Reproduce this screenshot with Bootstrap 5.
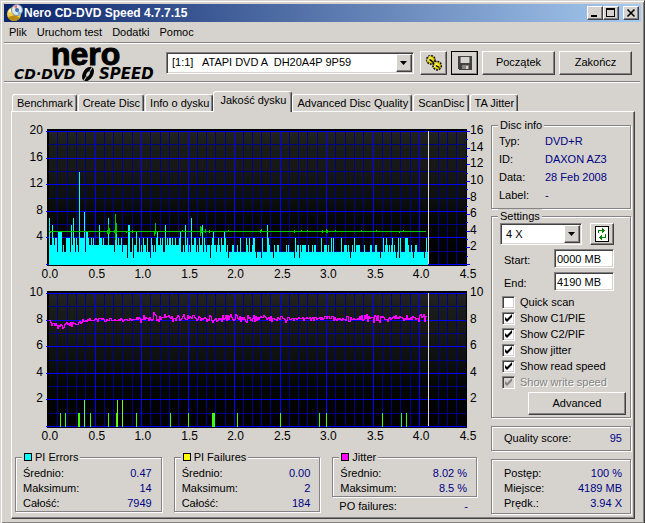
<!DOCTYPE html>
<html lang="pl">
<head>
<meta charset="utf-8">
<meta name="viewport" content="width=device-width, initial-scale=1">
<title>Nero CD-DVD Speed 4.7.7.15</title>
<link href="https://cdn.jsdelivr.net/npm/bootstrap@5.3.0/dist/css/bootstrap.min.css" rel="stylesheet">
<style>
:root{--face:#d6d3ce;--shade:#848284;--dark:#424142;--navy:#000084}
body{background:var(--face);color:#000;font:11px/15px "Liberation Sans",Arial,sans-serif}
.win{min-height:100vh;padding:2px 3px 4px 2px;border:1px solid var(--face);border-right-color:var(--dark);border-bottom-color:var(--dark);box-shadow:inset 1px 1px #fff,inset -1px -1px var(--shade)}
.titlebar{height:18px;margin:1px 0 0 1px;padding:0 2px;background:linear-gradient(90deg,#0a246a,#a6caf0);color:#fff}
.titlebar h1{font:bold 12px/18px "Liberation Sans",Arial,sans-serif}
.raised{background:var(--face);border:1px solid;border-color:#fff var(--dark) var(--dark) #fff;border-radius:0;box-shadow:inset -1px -1px var(--shade);color:#000;padding:0;font-size:11px;line-height:15px}
.capbtn{width:16px;height:14px}
.menubar{height:20px;padding-left:6px;gap:10px}
.menubar a{color:#000;text-decoration:none;line-height:20px}
.etch{height:2px;margin:0 1px;border-top:1px solid var(--shade);border-bottom:1px solid #fff}
.tools{height:37px;padding:0 9px 0 11px}
.logo{overflow:visible}
.sunk{background:#fff;border:1px solid;border-color:var(--shade) #fff #fff var(--shade);box-shadow:inset 1px 1px var(--dark),inset -1px -1px var(--face);border-radius:0;color:#000;font-size:11px}
select.sunk{appearance:none;width:100%;height:22px;padding:0 20px 0 5px;line-height:15px}
.drop{top:2px;right:2px;bottom:2px;width:16px;pointer-events:none}
.icobtn{width:27px;height:24px}
.icobtn.def{outline:1px solid #000;outline-offset:-1px;border-color:#000}
.bigbtn{width:73px;height:24px}
.drive{margin-right:6px}
.tabstrip{padding:8px 0 0 9px;height:28px}
.tabstrip a{height:17px;padding:0 3px 0 4px;color:#000;text-decoration:none;line-height:17px;border:1px solid;border-color:#fff var(--dark) transparent #fff;border-bottom:0;border-radius:3px 3px 0 0;box-shadow:inset -1px 0 var(--shade);margin-right:1px;white-space:nowrap}
.tabstrip a.now{height:21px;padding:0 5px 0 6px;position:relative;margin:0 0 -1px -1px;background:var(--face)}
.sheet{margin:0 6px 0 8px;border:1px solid;border-color:#fff var(--dark) var(--dark) #fff;box-shadow:inset -1px -1px var(--shade);padding:0 3px 4px 0}
.chart{display:block;width:100%;height:auto}
.chart text{font:12px "Liberation Sans",Arial,sans-serif}
.group{border:1px solid var(--shade);box-shadow:1px 1px #fff,inset 1px 1px #fff}
.group legend{float:none;width:auto;margin:0 0 0 6px;padding:0 2px;font-size:11px;line-height:14px;background:var(--face)}
.side{width:140px;padding-top:6px}
.val{color:var(--navy)}
.disc{padding:0 7px 4px;line-height:18px}
.disc dt{width:46px;font-weight:400}
.stats{padding:3px 14px 0 3px;gap:12px}
.stats>*{flex:1 1 0}
.rows{padding:2px 9px 0 7px}
.chip{display:inline-block;width:8px;height:8px;border:1px solid #000;margin-right:3px}
.field{width:60px;height:19px;padding:0 2px}
.span-row{padding-top:4px}
.reload{height:22px;padding:2px 4px}
.tick.form-check-input{width:13px;height:13px;margin:0 5px 0 0;float:none;border:1px solid;border-color:var(--shade) #fff #fff var(--shade);border-radius:0;background:#fff center/9px 9px no-repeat;box-shadow:inset 1px 1px var(--dark),inset -1px -1px var(--face);opacity:1}
.tick.form-check-input:checked{background-image:url("data:image/svg+xml,%3Csvg xmlns='http://www.w3.org/2000/svg' viewBox='0 0 9 9'%3E%3Cpath d='M1 3v3l2 2 5-5V0L3 5z'/%3E%3C/svg%3E")}
.tick.form-check-input:disabled{background-color:var(--face);filter:none}
.tick.form-check-input:disabled:checked{background-image:url("data:image/svg+xml,%3Csvg xmlns='http://www.w3.org/2000/svg' viewBox='0 0 9 9'%3E%3Cpath fill='%23848284' d='M1 3v3l2 2 5-5V0L3 5z'/%3E%3C/svg%3E")}
.off,.form-check-input:disabled~.off{color:var(--shade);text-shadow:1px 1px #fff;opacity:1}
.checks{line-height:16px;padding:3px 0 2px 10px}
.advbtn{width:98px;height:23px}
.advrow{padding:0 4px 2px}
.totals{line-height:15px}
</style>
<script src="https://cdn.jsdelivr.net/npm/bootstrap@5.3.0/dist/js/bootstrap.bundle.min.js"></script>
</head>
<body>
<div class="win d-flex flex-column">
  <header class="titlebar d-flex align-items-center">
    <svg width="18" height="18" viewBox="0 0 18 18" aria-hidden="true"><circle cx="8" cy="10" r="7" fill="#f3cf45"/><path d="M2 13a7 7 0 0 0 12 1l-5-3z" fill="#b98a12"/><path d="M2 8a7 7 0 0 1 4-4l2 5z" fill="#fff6b0"/><circle cx="11" cy="6" r="5.500" fill="#dfe8ef" stroke="#7b95aa"/><path d="M11 6 8 2.500a5 5 0 0 1 3-1.500z" fill="#e77"/><path d="M11 6l4 3a5 5 0 0 1-3 2z" fill="#79b6e8"/><circle cx="11" cy="6" r="2" fill="#3d6fae"/></svg>
    <h1 class="m-0 ms-0 flex-grow-1">Nero CD-DVD Speed 4.7.7.15</h1>
    <button class="raised capbtn d-flex" aria-label="Minimalizuj"><svg width="14" height="12" shape-rendering="crispEdges"><path d="M3 8h6v2H3z"/></svg></button>
    <button class="raised capbtn d-flex" aria-label="Maksymalizuj"><svg width="14" height="12" shape-rendering="crispEdges"><path d="M2 1h9v9H2zM3 3v6h7V3z" fill-rule="evenodd"/></svg></button>
    <button class="raised capbtn d-flex ms-1 me-0" aria-label="Zamknij"><svg width="14" height="12"><path d="M3.500 2.500l7 7M10.500 2.500l-7 7" stroke="#000" stroke-width="1.600"/></svg></button>
  </header>
  <nav class="menubar d-flex">
    <a href="#">Plik</a><a href="#">Uruchom test</a><a href="#">Dodatki</a><a href="#">Pomoc</a>
  </nav>
  <div class="etch"></div>
  <div class="tools d-flex align-items-center">
    <svg class="logo flex-shrink-0" width="152" height="37" viewBox="14 44 152 37" role="img" aria-label="nero CD-DVD SPEED">
      <text x="51" y="65" font-family="Liberation Sans,Arial,sans-serif" font-weight="700" font-size="32" stroke="#000" stroke-width="1">nero</text>
      <text x="14" y="79" font-family="DejaVu Sans,sans-serif" font-weight="700" font-style="italic" font-size="14">CD·DVD</text>
      <text x="99" y="79" font-family="DejaVu Sans,sans-serif" font-weight="700" font-style="italic" font-size="15">SPEED</text>
      <g transform="rotate(32 88 74)"><ellipse cx="88" cy="74" rx="5" ry="8"/><path d="M88 66v5M88 77v5" stroke="#d6d3ce"/><ellipse cx="88" cy="74" rx="1.500" ry="3" fill="#d6d3ce"/></g>
    </svg>
    <div class="drive position-relative flex-grow-1">
      <select class="sunk" aria-label="Napęd"><option>[1:1] &nbsp; ATAPI DVD A &nbsp;DH20A4P 9P59</option></select>
      <span class="raised drop position-absolute d-flex align-items-center justify-content-center"><svg width="8" height="4"><path d="M0 0h7L3.500 4z"/></svg></span>
    </div>
    <button class="raised icobtn" aria-label="Opcje"><svg width="18" height="18" viewBox="0 0 20 20"><g stroke="#000"><circle cx="6.500" cy="6.500" r="4.500" fill="#f7e600" stroke-dasharray="2 1" stroke-width="2"/><circle cx="6.500" cy="6.500" r="3.500" fill="#f7e600" stroke="#b5a500"/><path d="M5 2l1 4-4 1" stroke="#fff" fill="none"/><circle cx="13.500" cy="13" r="4.500" fill="#f7e600" stroke-dasharray="2 1" stroke-width="2"/><circle cx="13.500" cy="13" r="3.500" fill="#f7e600" stroke="#b5a500"/><path d="M12 9l1 4-3 1" stroke="#fff" fill="none"/><path d="M5 6l4 3M12 13l4 2" stroke-width="1.500"/></g></svg></button>
    <button class="raised icobtn def ms-1" aria-label="Zapisz"><svg width="16" height="16" viewBox="0 0 16 16" shape-rendering="crispEdges"><path d="M1 1h14v14H2l-1-1z" fill="#424142"/><path d="M4 2h8v6H4z" fill="#d6d3ce"/><path d="M3 2h1v6H3zM12 2h1v6h-1z" fill="#848284"/><path d="M5 10h7v4H5z" fill="#848284"/><path d="M9 11h2v3H9z" fill="#d6d3ce"/></svg></button>
    <button class="raised bigbtn ms-1">Początek</button>
    <button class="raised bigbtn ms-1">Zakończ</button>
  </div>
  <div class="etch"></div>
  <nav class="tabstrip d-flex align-items-end">
    <a href="#">Benchmark</a><a href="#">Create Disc</a><a href="#">Info o dysku</a><a href="#" class="now" aria-current="page">Jakość dysku</a><a href="#">Advanced Disc Quality</a><a href="#">ScanDisc</a><a href="#">TA Jitter</a>
  </nav>
  <main class="sheet d-flex flex-grow-1">
    <section class="flex-grow-1">
      <div class="pt-2">
        <svg class="chart" id="errors" viewBox="11 120 480 164" role="img" aria-label="PI Errors"></svg>
        <svg class="chart" id="fails" viewBox="11 122 480 164" role="img" aria-label="PI Failures, Jitter"></svg>
      </div>
      <div class="stats d-flex align-items-start">
        <fieldset class="group"><legend><span class="chip" style="background:#0ff"></span>PI Errors</legend>
          <div class="rows"><div class="d-flex justify-content-between"><span>Średnio:</span><span class="val">0.47</span></div><div class="d-flex justify-content-between"><span>Maksimum:</span><span class="val">14</span></div><div class="d-flex justify-content-between"><span>Całość:</span><span class="val">7949</span></div></div></fieldset>
        <fieldset class="group"><legend><span class="chip" style="background:#ff0"></span>PI Failures</legend>
          <div class="rows"><div class="d-flex justify-content-between"><span>Średnio:</span><span class="val">0.00</span></div><div class="d-flex justify-content-between"><span>Maksimum:</span><span class="val">2</span></div><div class="d-flex justify-content-between"><span>Całość:</span><span class="val">184</span></div></div></fieldset>
        <div><fieldset class="group"><legend><span class="chip" style="background:#f0f"></span>Jitter</legend>
          <div class="rows"><div class="d-flex justify-content-between"><span>Średnio:</span><span class="val">8.02 %</span></div><div class="d-flex justify-content-between"><span>Maksimum:</span><span class="val">8.5 %</span></div></div></fieldset>
          <div class="rows d-flex justify-content-between"><span>PO failures:</span><span class="val">-</span></div></div>
      </div>
    </section>
    <aside class="side d-flex flex-column flex-shrink-0">
      <fieldset class="group"><legend>Disc info</legend>
        <dl class="disc m-0">
          <div class="d-flex"><dt>Typ:</dt><dd class="val m-0">DVD+R</dd></div>
          <div class="d-flex"><dt>ID:</dt><dd class="val m-0">DAXON AZ3</dd></div>
          <div class="d-flex"><dt>Data:</dt><dd class="val m-0">28 Feb 2008</dd></div>
          <div class="d-flex"><dt>Label:</dt><dd class="val m-0">-</dd></div>
        </dl>
      </fieldset>
      <fieldset class="group"><legend>Settings</legend>
        <div class="ps-2 pe-3 d-flex align-items-center justify-content-between">
          <div class="position-relative flex-grow-1 me-2">
            <select class="sunk" aria-label="Prędkość"><option>4 X</option></select>
            <span class="raised drop position-absolute d-flex align-items-center justify-content-center"><svg width="8" height="4"><path d="M0 0h7L3.500 4z"/></svg></span>
          </div>
          <button class="raised reload d-flex" aria-label="Odśwież"><svg width="14" height="16" viewBox="0 0 14 16" shape-rendering="crispEdges"><path d="M.5.5h13v15H.5z" fill="#fff" stroke="#000"/><path d="M3 7V4h4V2h1v1h1v1h1v1H9v1H8v1H7V5H4v2zM11 8v4H7v2H6v-1H5v-1H4v-1h1v-1h1V9h1v2h3V8z" fill="#008200"/></svg></button>
        </div>
        <div class="span-row ps-2 pe-3 d-flex justify-content-between align-items-end"><label for="start" class="ps-1">Start:</label><input id="start" class="sunk field" value="0000 MB"></div>
        <div class="span-row ps-2 pe-3 d-flex justify-content-between align-items-end"><label for="end" class="ps-1">End:</label><input id="end" class="sunk field" value="4190 MB"></div>
        <div class="checks">
          <div class="d-flex align-items-center"><input type="checkbox" class="form-check-input tick" id="c0"><label for="c0">Quick scan</label></div>
          <div class="d-flex align-items-center"><input type="checkbox" class="form-check-input tick" id="c1" checked><label for="c1">Show C1/PIE</label></div>
          <div class="d-flex align-items-center"><input type="checkbox" class="form-check-input tick" id="c2" checked><label for="c2">Show C2/PIF</label></div>
          <div class="d-flex align-items-center"><input type="checkbox" class="form-check-input tick" id="c3" checked><label for="c3">Show jitter</label></div>
          <div class="d-flex align-items-center"><input type="checkbox" class="form-check-input tick" id="c4" checked><label for="c4">Show read speed</label></div>
          <div class="d-flex align-items-center"><input type="checkbox" class="form-check-input tick" id="c5" checked disabled><label for="c5" class="off">Show write speed</label></div>
        </div>
        <div class="advrow d-flex justify-content-end"><button class="raised advbtn">Advanced</button></div>
      </fieldset>
      <div class="group mt-2 px-2 py-1 d-flex justify-content-between"><span class="ps-1">Quality score:</span><span class="val">95</span></div>
      <div class="group totals mt-2 px-2 pt-1 flex-grow-1 d-flex flex-column justify-content-center">
        <div class="d-flex justify-content-between"><span class="ps-1">Postęp:</span><span class="val">100 %</span></div>
        <div class="d-flex justify-content-between"><span class="ps-1">Miejsce:</span><span class="val">4189 MB</span></div>
        <div class="d-flex justify-content-between"><span class="ps-1">Prędk.:</span><span class="val">3.94 X</span></div>
      </div>
    </aside>
  </main>
</div>
<script>
const X0 = 48, XS = 93, BOTTOM = 264, H = 133;
let seed = 7;
const rnd = () => (seed = (seed * 1103515245 + 12345) % 2147483648) / 2147483648;
const rect = (x, y, w, h, f) => `<rect x="${x}" y="${y}" width="${w}" height="${h}" fill="${f}"/>`;
const text = (x, y, a, t) => `<text x="${x}" y="${y}" text-anchor="${a}">${t}</text>`;

function frame(id, leftMax, rightMax, ticks) {
  let s = `<defs><linearGradient id="g-${id}" x2="0" y2="1"><stop offset="0" stop-color="#222"/><stop offset=".15" stop-color="#181c18"/><stop offset=".3" stop-color="#171717"/><stop offset=".5" stop-color="#0c100e"/><stop offset=".7" stop-color="#040604"/><stop offset="1" stop-color="#000"/></linearGradient></defs><g shape-rendering="crispEdges">`;
  s += rect(46, 129, 421, 137, '#000') + rect(X0, 131, 418, 133, `url(#g-${id})`);
  for (let i = 1; i < 45; i++) if (i % 5) s += rect(Math.round(X0 + i * XS / 10) - 1, 131, 1, 133, '#000084');
  for (let i = 1; i < 10; i += 2) s += rect(X0, Math.round(BOTTOM - i * H / 10), 418, 1, '#000084');
  for (let i = 1; i < 9; i++) s += rect(Math.round(X0 + i * XS / 2) - 1, 131, 1, 133, '#0000ff');
  for (let i = 0; i <= 5; i++) s += rect(45, Math.round(BOTTOM - i * H / 5), 421, 1, '#0000ff');
  if (ticks) for (let i = 0; i <= 16; i++) s += rect(466, Math.round(BOTTOM - i * H / 16), i % 2 ? 2 : 4, 1, '#0000ff');
  s += '</g>';
  for (let i = 1; i <= 5; i++) s += text(42, Math.round(BOTTOM - i * H / 5) + 3, 'end', leftMax * i / 5);
  const n = ticks ? 8 : 5;
  for (let i = 1; i <= n; i++) s += text(470, Math.round(BOTTOM - i * H / n) + 3, 'start', rightMax * i / n);
  for (let i = 0; i <= 9; i++) s += text(Math.round(X0 + i * XS / 2) + 1, 278, 'middle', (i / 2).toFixed(1));
  return s;
}

/* PI errors per position with read speed on top */
const peaks = {48:7,51:6,58:5,59:5,70:6,72:7,78:14,83:8,85:5,86:5,98:6,107:7,115:5,127:6,128:6,135:5,156:5,164:6,179:5,184:6,190:7,201:6,212:5,223:5,239:4,245:4,253:4,254:4,262:4,267:6,321:4,331:4,333:4,354:4,392:4,406:4,407:4,426:4,
  126:1,132:1,149:1,209:1,227:1,256:1,261:1,273:1,294:1,299:1,350:1,380:1,396:1,399:1,413:1,424:1};
let a = frame('e', 20, 16, true) + '<g shape-rendering="crispEdges">';
for (let x = 48; x < 428; x++) {
  const r = rnd();
  let v = x < 118 ? (r < .12 ? 2 : r < .6 ? 3 : r < .93 ? 4 : 5) : x < 225 ? (r < .3 ? 2 : r < .75 ? 3 : 4) : (r < .68 ? 2 : r < .98 ? 3 : 4);
  if (peaks[x]) v = peaks[x];
  const h = Math.round(v * H / 20);
  a += rect(x, 265 - h, 1, h, '#00ffff');
}
a += rect(48, 231, 378, 1, '#00c800');
for (const [x, y, h] of [[49,231,2],[106,230,4],[107,224,10],[108,228,6],[113,230,3],[114,214,26],[115,223,11],[125,231,2],[131,230,3],[153,231,5],[154,223,11],[181,230,2],[199,226,10],[200,227,6],[204,229,4],[208,230,3],[227,230,2],[260,230,3],[261,229,3],[294,230,3],[301,230,2],[307,230,2],[322,230,3],[326,229,4],[327,230,3],[335,230,2],[361,230,2],[376,230,2],[399,231,2],[403,230,2]])
  a += rect(x, y, 1, h, '#00c800');
a += rect(428, 131, 1, 133, '#dedbde') + '</g>';
document.getElementById('errors').innerHTML = a;

/* PI failures with jitter on top */
let b = frame('f', 10, 10, false) + '<g shape-rendering="crispEdges">';
for (const [x, v, w] of [[59,1,1],[64,1,1],[77,1,2],[83,2,1],[89,1,1],[107,1,1],[115,1,2],[116,2,1],[121,2,1],[135,1,1],[169,1,1],[187,1,1],[211,1,3],[236,1,1],[280,1,1],[319,1,1],[326,1,1],[382,1,1],[401,1,1],[406,1,1]])
  b += rect(x, v > 1 ? 238 : 251, w, v > 1 ? 27 : 14, v > 1 ? '#6bff18' : '#42ff00');
let prev = 158;
for (let x = 48; x < 427; x++) {
  const mid = x < 54 ? 158 + (x - 48) : x < 62 ? 164 : x < 84 ? 164 - (x - 62) * .27 : x < 140 ? 157.500 : 156;
  const amp = x < 84 ? 2.500 : x < 135 ? 1.500 : x > 290 && x < 345 ? 2 : 3.600;
  let y = Math.round(mid + (rnd() + rnd() - 1) * amp * 1.300);
  if (x === 152) y = 150;
  b += rect(x, Math.min(prev, y), 1, Math.abs(prev - y) + 1, '#ff00ff');
  prev = y;
}
b += rect(428, 131, 1, 133, '#dedbde') + '</g>';
document.getElementById('fails').innerHTML = b;
</script>
</body>
</html>
